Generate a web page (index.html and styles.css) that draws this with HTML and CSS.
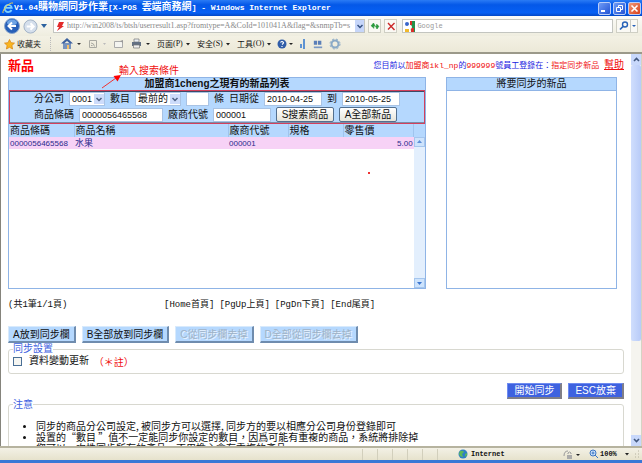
FILE: index.html
```
<!DOCTYPE html>
<html lang="zh-Hant">
<head>
  <meta charset="UTF-8" />
  <meta name="viewport" content="width=device-width, initial-scale=1.0" />
  <title>V1.04購物網同步作業[X-POS 雲端商務網]</title>
  <link rel="stylesheet" href="styles.css">
</head>
<body>
  <!-- Title bar -->
  <header class="titlebar">
    <svg class="ie" width="12" height="12" viewBox="0 0 12 12"><path d="M9.500 8A3.600 3.600 0 1 1 9.800 5.800H3" fill="none" stroke="#7fd0ff" stroke-width="1.800"/><path d="M1 11C0 8 7 0 11 1" fill="none" stroke="#f3d04a"/></svg>
    <h1 class="title">V1.04<span class="cjk">購物網同步作業</span>[X-POS <span class="cjk">雲端商務網</span>] - Windows Internet Explorer</h1>
    <div class="winbtns">
      <button class="winbtn" aria-label="Minimize"><svg width="11" height="11" viewBox="0 0 11 11"><path d="M2 8h4" stroke="#fff" stroke-width="2"/></svg></button>
      <button class="winbtn" aria-label="Restore"><svg width="11" height="11" viewBox="0 0 11 11"><path d="M4.500 4V2.500h4v4H7M2.500 4.500h4v4h-4z" fill="none" stroke="#fff"/></svg></button>
      <button class="winbtn close" aria-label="Close"><svg width="11" height="11" viewBox="0 0 11 11"><path d="M2.500 2.500l6 6M8.500 2.500l-6 6" stroke="#fff" stroke-width="1.600"/></svg></button>
    </div>
  </header>

  <!-- Address bar -->
  <div class="addressbar">
    <button class="plain" aria-label="Back"><svg width="16" height="16" viewBox="0 0 16 16"><circle cx="8" cy="8" r="7.500" fill="#2860b8" stroke="#8aa6cc"/><ellipse cx="8" cy="4.500" rx="5" ry="3" fill="#6fa4e4"/><path d="M12 8H5M8 4.500L4.500 8 8 11.500" fill="none" stroke="#fff" stroke-width="2"/></svg></button>
    <button class="plain" aria-label="Forward"><svg width="15" height="15" viewBox="0 0 16 16"><circle cx="8" cy="8" r="7" fill="#d5dfec" stroke="#9fb0c4"/><path d="M4 8h7M8 4.500L11.500 8 8 11.500" fill="none" stroke="#fff" stroke-width="2"/></svg></button>
    <svg class="history" width="6" height="4" viewBox="0 0 6 4"><path d="M0 0h6L3 4z" fill="#2c62a0"/></svg>
    <div class="urlbox">
      <svg width="9" height="11" viewBox="0 0 9 11"><path d="M3 1h5L6 5h2L1 10l2-4H1z" fill="#e22a2a"/></svg>
      <input class="url" aria-label="Address" value="http://win2008/ts/btsh/userresult1.asp?fromtype=A&amp;CoId=101041A&amp;flag=&amp;snmpTb=s">
      <button class="drop" aria-label="Show addresses"><svg width="6" height="5" viewBox="0 0 6 5"><path d="M.5 1L3 3.500 5.500 1" fill="none" stroke="#35507f" stroke-width="1.500"/></svg></button>
    </div>
    <button class="tool" aria-label="Refresh"><svg width="10" height="10" viewBox="0 0 10 10"><path d="M1 5l2.500-3L5 5H3.800v2.500M9 5L7 8 5.500 5h1.200V3" fill="#2b9a3c" stroke="#2b9a3c" stroke-width=".7"/></svg></button>
    <button class="tool" aria-label="Stop"><svg width="10" height="10" viewBox="0 0 10 10"><path d="M2 2l6.500 7M8.500 2L2 8.500" stroke="#cc2a2a" stroke-width="1.400"/></svg></button>
    <div class="searchbox">
      <svg width="11" height="11" viewBox="0 0 11 11"><path d="M6 0h5v11H7z" fill="#27914a"/><path d="M6 0h2v4H6zM7 7h3v4H7z" fill="#d9302a"/><circle cx="3" cy="3" r="2" fill="#3a66c9"/><circle cx="6" cy="6" r="2" fill="#fff"/><path d="M1 8h4v3H1z" fill="#f1b92b"/></svg>
      <input class="url" aria-label="Search" placeholder="Google">
    </div>
    <button class="tool go" aria-label="Go"><svg width="18" height="12" viewBox="0 0 18 12"><circle cx="7" cy="4.500" r="2.500" fill="none" stroke="#2862b8" stroke-width="1.400"/><path d="M5 6.500L2 9.500" stroke="#2862b8" stroke-width="1.700"/><path d="M12.500 0v12" stroke="#c9cbc6"/><path d="M14 5h4l-2 2z" fill="#2862b8"/></svg></button>
  </div>

  <!-- Favourites and command bar -->
  <nav class="toolbar" lang="zh-Hans">
    <a href="#" class="fav"><svg width="11" height="11" viewBox="0 0 11 11"><path d="M5.500.5l1.500 3.200 3.500.4-2.600 2.400.7 3.500-3.100-1.700L2.400 10l.7-3.500L.5 4.100 4 3.700z" fill="#f9b51f" stroke="#d8800d" stroke-width=".7"/></svg>收藏夹</a>
    <div class="cmds">
      <button class="plain" aria-label="Home"><svg width="21" height="12" viewBox="0 0 21 12"><path d="M2 5h8v6H2z" fill="#7893bd"/><path d="M0 5.500L6 0l6 5.500H9L6 3 3 5.500z" fill="#3d62a0"/><path d="M6 7h2v4H6z" fill="#f5c06a"/><path d="M16 5h4l-2 2z" fill="#333"/></svg></button>
      <button class="plain" aria-label="Feeds"><svg width="19" height="12" viewBox="0 0 19 12"><path d="M1.500 2.500h7v7h-7zM3 5q3 0 3.500 3.500M3 7.500h1.500" fill="none" stroke="#a9a9a2"/><path d="M15 5h3l-1.500 2z" fill="#bbb"/></svg></button>
      <button class="plain" aria-label="Mail"><svg width="12" height="12" viewBox="0 0 12 12"><path d="M1.500 3.500h8v6h-8z" fill="#f4f4f0" stroke="#aaa"/><path d="M7 3l3-1v3z" fill="#999"/></svg></button>
      <button class="plain" aria-label="Print"><svg width="20" height="12" viewBox="0 0 20 12"><path d="M3 1h5v3H3z" fill="#e9eef5" stroke="#777" stroke-width=".7"/><path d="M1 4h9v4H1z" fill="#637083"/><path d="M2.500 7h6v3h-6z" fill="#eee" stroke="#777" stroke-width=".7"/><path d="M15 5h4l-2 2z" fill="#222"/></svg></button>
      <button class="menu">页面<i>(P)</i><svg width="4" height="3" viewBox="0 0 4 3"><path d="M0 0h4L2 2.500z" fill="#222"/></svg></button>
      <button class="menu">安全<i>(S)</i><svg width="4" height="3" viewBox="0 0 4 3"><path d="M0 0h4L2 2.500z" fill="#222"/></svg></button>
      <button class="menu">工具<i>(O)</i><svg width="4" height="3" viewBox="0 0 4 3"><path d="M0 0h4L2 2.500z" fill="#222"/></svg></button>
      <button class="plain" aria-label="Help"><svg width="16" height="12" viewBox="0 0 16 12"><circle cx="5" cy="6" r="4.500" fill="#315da8"/><path d="M3.500 4.500q1.500-2 3 0Q6.500 5.500 5 6.500M5 8v1" fill="none" stroke="#fff" stroke-width="1.200"/><path d="M12 5h4l-2 2z" fill="#222"/></svg></button>
      <svg width="8" height="12" viewBox="0 0 8 12"><path d="M5 1v10M2 6v4" stroke="#5f93d2" stroke-width="2"/></svg>
      <svg width="10" height="12" viewBox="0 0 12 12"><path d="M1 2h4v5H1zM6 2h4v5H6z" fill="#5b7fb8"/><path d="M1 10h10" stroke="#7898c5" stroke-width="2"/></svg>
      <svg width="12" height="12" viewBox="0 0 12 12"><circle cx="6" cy="6" r="3.500" fill="none" stroke="#8aa9c6" stroke-width="2"/><circle cx="6" cy="6" r="5" fill="none" stroke="#8aa9c6" stroke-dasharray="2 2"/></svg>
    </div>
  </nav>

  <!-- Page -->
  <div class="viewport">
    <main class="page">
      <div class="pagehead">
        <h2>新品</h2>
        <p class="who">您目前以<em>加盟商ikl_np</em>的<em>999999</em>號員工登錄在：<em>指定同步新品</em> <a href="#">幫助</a></p>
      </div>

      <div class="panels">
        <section class="list">
          <h3>加盟商1cheng之現有的新品列表</h3>
          <form class="search">
            <div class="row">
              <label for="branch">分公司</label>
              <span class="pick"><select id="branch" class="w-branch"><option>0001</option></select><svg width="10" height="10" viewBox="0 0 10 10"><path d="M2.500 4L5 6.500 7.500 4" fill="none" stroke="#4d6185" stroke-width="1.500"/></svg></span>
              <label for="count">數目</label>
              <span class="pick"><select id="count" class="w-order"><option>最前的</option></select><svg width="10" height="10" viewBox="0 0 10 10"><path d="M2.500 4L5 6.500 7.500 4" fill="none" stroke="#4d6185" stroke-width="1.500"/></svg></span>
              <input id="num" class="w-num" aria-label="條數">
              <label for="num">條</label>
              <label for="from">日期從</label>
              <input id="from" class="w-date" value="2010-04-25">
              <label for="to">到</label>
              <input id="to" class="w-date" value="2010-05-25">
            </div>
            <div class="row">
              <label for="barcode">商品條碼</label>
              <input id="barcode" class="w-code" value="0000056465568">
              <label for="vendor">廠商代號</label>
              <input id="vendor" class="w-date" value="000001">
              <button type="button" class="xp">S搜索商品</button>
              <button type="button" class="xp">A全部新品</button>
            </div>
          </form>
          <div class="results">
            <table>
              <thead>
                <tr><th class="c-code">商品條碼</th><th class="c-name">商品名稱</th><th class="c-vendor">廠商代號</th><th class="c-spec">規格</th><th>零售價</th></tr>
              </thead>
              <tbody>
                <tr><td>0000056465568</td><td class="name">水果</td><td>000001</td><td></td><td class="price">5.00</td></tr>
              </tbody>
            </table>
            <div class="minibar">
              <span class="corner"></span>
              <button aria-label="Up"><svg width="5" height="4" viewBox="0 0 5 4"><path d="M0 3h5L2.500 0z" fill="#5e8fd8"/></svg></button>
              <span class="track"></span>
              <button aria-label="Down"><svg width="5" height="4" viewBox="0 0 5 4"><path d="M0 1h5L2.500 4z" fill="#3c76d0"/></svg></button>
            </div>
          </div>
          <!-- Callout over the search box -->
          <svg class="arrow" width="22" height="15" viewBox="0 0 22 15"><path d="M1 14L15 4" stroke="#e33"/><path d="M20 1l-3.500 6.500L12.500 2z" fill="#f00"/></svg>
          <span class="callout">輸入搜索條件</span>
          <span class="dot"></span>
        </section>

        <section class="target">
          <h3>將要同步的新品</h3>
        </section>
      </div>

      <div class="pager">
        <span class="total">(共1筆1/1頁)</span>
        <a href="#">[Home首頁]</a> <a href="#">[PgUp上頁]</a> <a href="#">[PgDn下頁]</a> <a href="#">[End尾頁]</a>
      </div>

      <div class="actions">
        <button class="act">A放到同步欄</button>
        <button class="act">B全部放到同步欄</button>
        <button class="act" disabled>C從同步欄去掉</button>
        <button class="act" disabled>D全部從同步欄去掉</button>
      </div>

      <fieldset>
        <legend>同步設置</legend>
        <label class="check"><input type="checkbox"> 資料變動更新</label>
        <span class="note">（＊註）</span>
      </fieldset>

      <div class="submit">
        <button>開始同步</button>
        <button>ESC放棄</button>
      </div>

      <fieldset class="notice">
        <legend>注意</legend>
        <ul>
          <li>同步的商品分公司設定, 被同步方可以選擇, 同步方的要以相應分公司身份登錄即可</li>
          <li>設置的“數目 ”值不一定能同步你設定的數目，因爲可能有重複的商品，系統將排除掉</li>
          <li>您可以一次性同步所有的產品，不用擔心會有重複的產品</li>
        </ul>
      </fieldset>
    </main>

    <div class="scrollbar">
      <button aria-label="Scroll up"><svg width="7" height="5" viewBox="0 0 7 5"><path d="M1 4l2.500-2.500L6 4" fill="none" stroke="#42587f" stroke-width="1.600"/></svg></button>
      <span class="thumb"></span>
      <span class="rest"></span>
      <button aria-label="Scroll down"><svg width="7" height="5" viewBox="0 0 7 5"><path d="M1 1l2.500 2.500L6 1" fill="none" stroke="#42587f" stroke-width="1.600"/></svg></button>
    </div>
  </div>

  <!-- Status bar -->
  <footer class="statusbar">
    <div class="cells"><span></span><span></span><span></span><span></span><span></span><span></span></div>
    <div class="zone"><svg width="10" height="10" viewBox="0 0 10 10"><circle cx="5" cy="5" r="4.500" fill="#2f7fc4"/><path d="M2 2q3-1 4 1L4 5l1 3q-3 0-4-3zM7 5l2-1v2L7 8z" fill="#5cb85a"/></svg>Internet</div>
    <svg class="protect" width="18" height="11" viewBox="0 0 18 11"><path d="M2 7Q2 2 6 2M6 5V4q1.500-2 3 0v1" fill="none" stroke="#999"/><path d="M5 6h5v4H5z" fill="#aaa"/><path d="M14 5h4l-2 2z" fill="#222"/></svg>
    <div class="zoom"><svg width="9" height="10" viewBox="0 0 9 10"><circle cx="4" cy="4" r="3" fill="#cfe3fa" stroke="#3b76c4"/><path d="M6 6l3 3M2.500 4h3M4 2.500v3" stroke="#3b76c4"/></svg>100%<svg width="4" height="3" viewBox="0 0 4 3"><path d="M0 0h4L2 2.500z" fill="#222"/></svg></div>
    <svg width="7" height="8" viewBox="0 0 7 8"><path d="M5 1h1M5 4h1M5 7h1M2 4h1M2 7h1" stroke="#b5b2a0"/></svg>
  </footer>
</body>
</html>
```

FILE: styles.css
```
:root {
  --blue: #b5d8fe;
  --line: #8fb4e6;
  --royal: #3e62e0;
  --chrome: #ece9d8;
  --mono: "Liberation Mono", "Noto Sans CJK TC", monospace;
  --sans: "Liberation Sans", "Noto Sans CJK TC", sans-serif;
}
*, *::before, *::after { box-sizing: border-box; }
html, body { height: 100%; margin: 0; }
body {
  display: flex;
  flex-direction: column;
  overflow: hidden;
  background: #fff;
  color: #111;
  font: 10px/12px var(--sans);
  border-bottom: 3px solid #3a78d6;
}
h1, h2, h3, p, ul { margin: 0; }
button, input, select { font: inherit; color: inherit; margin: 0; padding: 0; }
svg { display: block; flex: none; }
.plain { border: 0; background: none; }

/* Title bar */
.titlebar {
  display: flex;
  align-items: center;
  flex: none;
  height: 16px;
  padding: 0 1px 0 2px;
  background: linear-gradient(#2a7bf5, #0458e8 30%, #0660f4 80%, #0347c4);
  color: #fff;
}
.title {
  flex: 1;
  font: bold 8px/14px var(--mono);
  white-space: nowrap;
}
.title .cjk { font-size: 10px; }
.winbtns { display: flex; gap: 2px; }
.winbtn {
  width: 13px;
  height: 13px;
  border: 1px solid #b9cdf8;
  border-radius: 2px;
  background: linear-gradient(135deg, #6f9bf6, #2153d4);
}
.winbtn.close { background: linear-gradient(135deg, #f09a78, #d8401a); }

/* Address bar */
.addressbar {
  display: flex;
  align-items: center;
  gap: 3px;
  flex: none;
  height: 20px;
  padding: 0 4px;
  background: linear-gradient(#fbfbf8, #efeddf);
}
.history { margin-right: 3px; }
.urlbox, .searchbox {
  display: flex;
  align-items: center;
  gap: 2px;
  height: 14px;
  padding-left: 2px;
  border: 1px solid #c3c5c0;
  background: #fff;
}
.urlbox { flex: 315 1 0; }
.searchbox { flex: 212 1 0; padding-left: 1px; margin-left: 2px; }
.url {
  flex: 1;
  min-width: 0;
  border: 0;
  background: none;
  color: #888;
  font: 8px/10px "Liberation Serif", serif;
}
.searchbox .url { font: 7px/10px var(--mono); }
.url::placeholder { color: #999; }
.drop {
  display: grid;
  place-items: center;
  width: 9px;
  height: 12px;
  border: 0;
  background: #c6d6fa;
}
.tool {
  display: grid;
  place-items: center;
  width: 13px;
  height: 14px;
  border: 1px solid #cfcfc4;
  background: #faf9f4;
}
.go { width: 22px; }

/* Command bar */
.toolbar {
  display: flex;
  align-items: center;
  flex: none;
  height: 18px;
  padding: 0 4px;
  background: linear-gradient(#f3f1e4, var(--chrome));
  border-bottom: 2px solid #9b998a;
  font: 8px/14px "Noto Sans CJK SC", sans-serif;
}
.fav {
  display: flex;
  gap: 2px;
  align-items: center;
  width: 47px;
  border-right: 1px dotted #bbb;
  color: #222;
  text-decoration: none;
}
.cmds { display: flex; align-items: center; gap: 6px; padding-left: 10px; }
.menu { display: flex; align-items: center; width: 34px; border: 0; background: none; white-space: nowrap; }
.menu i { font: 8px/12px "Liberation Serif", serif; }
.menu svg { margin-left: 3px; }

/* Page area */
.viewport { display: flex; flex: 1; min-height: 0; border-left: 1px solid #85847c; }
.page { flex: 1; min-width: 0; overflow: hidden; padding: 3px 7px 0; }
.pagehead { display: flex; justify-content: space-between; height: 20px; }
h2 { color: #f00; font: bold 13px/18px var(--sans); }
.who { color: #1a1ae0; font: 8px/18px var(--mono); white-space: nowrap; }
.who em { color: #f01010; font-style: normal; }
.who a { color: #f01010; font-size: 10px; }

.panels { display: flex; gap: 20px; padding-right: 7px; height: 212px; }
.panels h3 {
  height: 13px;
  background: var(--blue);
  font: 10px/12px var(--sans);
  text-align: center;
}
.list {
  position: relative;
  display: flex;
  flex-direction: column;
  flex: 419 1 0;
  min-width: 0;
  border: 1px solid var(--line);
}
.list h3 { height: 12px; font-weight: bold; }
.target { flex: 170 1 0; border: 1px solid var(--line); }
.target h3 { border-bottom: 1px solid var(--line); }

/* Search form */
.search {
  display: flex;
  flex-direction: column;
  gap: 1px;
  height: 34px;
  padding: 1px 8px 1px 24px;
  border: 1px solid #d3405c;
  box-shadow: inset 0 1px #3d4a66, inset 0 -1px #7d8ca6;
  background: var(--blue);
}
.row { display: flex; align-items: center; gap: 5px; white-space: nowrap; }
.row input, .pick {
  height: 14px;
  border: 1px solid #a9c3e4;
  background: #fff;
}
.row input { padding: 0 2px; font: 9px/12px var(--sans); }
.pick { display: flex; align-items: center; }
.pick select {
  appearance: none;
  height: 12px;
  padding-left: 2px;
  border: 0;
  background: none;
}
.pick svg { background: #cddcfb; }
.w-branch { width: 24px; font-size: 9px; }
.w-order { width: 34px; }
.row .w-num { width: 23px; }
.w-date { width: 58px; }
.w-code { width: 84px; }
.xp {
  height: 15px;
  width: 58px;
  border: 1px solid #54708f;
  border-radius: 2px;
  background: linear-gradient(#fff, #e6e4da);
  line-height: 12px;
}

/* Result table */
.results { display: flex; flex: 1; }
.results table {
  flex: 1;
  align-self: flex-start;
  table-layout: fixed;
  border-collapse: collapse;
}
th, td { padding: 0 1px; text-align: left; white-space: nowrap; }
th { height: 13px; background: var(--blue); border-right: 1px solid #a0c4ee; font-weight: normal; line-height: 12px; }
td {
  height: 12px;
  background: #f7d2f6;
  color: #2a2a8c;
  font: 8px/11px var(--sans);
}
td.name { font-size: 9px; }
.c-code { width: 65px; }
.c-name { width: 154px; }
.c-vendor { width: 60px; }
.c-spec { width: 55px; }
.price { text-align: right; }
.minibar { display: flex; flex-direction: column; width: 11px; }
.corner { height: 13px; background: var(--blue); }
.minibar button {
  display: grid;
  place-items: center;
  height: 10px;
  border: 1px solid #a5c6ee;
  background: #cde3fc;
}
.track { flex: 1; background: #e3effd; }

.arrow { position: absolute; left: 92px; top: -4px; }
.callout { position: absolute; left: 110px; top: -13px; color: #f01010; }
.dot { position: absolute; left: 359px; top: 94px; width: 2px; height: 2px; background: #e33; }

/* Pager and actions */
.pager { display: flex; gap: 5px; margin-top: 9px; font: 9px/14px var(--mono); }
.pager a { color: inherit; text-decoration: none; }
.total { width: 151px; }
.actions { display: flex; gap: 6px; margin-top: 14px; }
.act {
  height: 17px;
  padding: 0 4px;
  border: 1px solid #d8eafc;
  border-right: 2px solid #6f8cae;
  border-bottom: 2px solid #6f8cae;
  background: var(--blue);
  line-height: 13px;
}
.act:disabled { color: #9fb2c6; text-shadow: 1px 1px 0 #e8f3ff; }

fieldset {
  margin: 0;
  padding: 0 4px 4px;
  border: 1px solid #d8d8d0;
  border-radius: 3px;
}
legend { padding: 0; color: var(--royal); line-height: 12px; }
.check { display: inline-flex; align-items: center; gap: 7px; }
.check input {
  appearance: none;
  width: 9px;
  height: 9px;
  border: 1px solid #4a6f96;
  background: #f6f6f2;
}
.note { color: #f01010; margin-left: 2px; }

.submit { display: flex; justify-content: flex-end; gap: 6px; margin-top: 9px; }
.submit button {
  height: 16px;
  padding: 0 6px;
  border: 1px solid #6f8cf0;
  border-right: 2px solid #807f88;
  border-bottom: 2px solid #807f88;
  background: var(--royal);
  color: #fff;
  line-height: 13px;
}
.notice ul {
  padding: 9px 0 0 23px;
  font: 10px/11px "Noto Sans CJK TC", sans-serif;
  white-space: nowrap;
}
.notice li::marker { font-size: 8px; }

/* Scrollbar */
.scrollbar {
  display: flex;
  flex-direction: column;
  width: 11px;
  background: #f5f4ef;
  border-right: 1px solid #d5d3c4;
}
.scrollbar button {
  display: grid;
  place-items: center;
  height: 11px;
  border: 0;
  background: #c8d8fb;
}
.thumb { flex: 276 1 0; border-radius: 2px; background: linear-gradient(90deg, #d0defd, #b8cbf8); }
.rest { flex: 94 1 0; }

/* Status bar */
.statusbar {
  display: flex;
  align-items: center;
  flex: none;
  height: 14px;
  padding-right: 2px;
  border-top: 2px solid #b6b39f;
  background: linear-gradient(#f3f1e6, #e6e2cc);
  font: bold 7px/10px "Liberation Mono", monospace;
}
.cells { display: flex; flex: 1; justify-content: flex-end; padding-right: 6px; }
.cells span { width: 15px; height: 11px; border-left: 1px solid #d2cfbc; }
.zone { display: flex; gap: 3px; width: 104px; }
.protect { margin-right: 9px; }
.zoom { display: flex; align-items: center; gap: 2px; width: 44px; }
.zoom svg:last-child { margin-left: auto; margin-right: 4px; }
```
